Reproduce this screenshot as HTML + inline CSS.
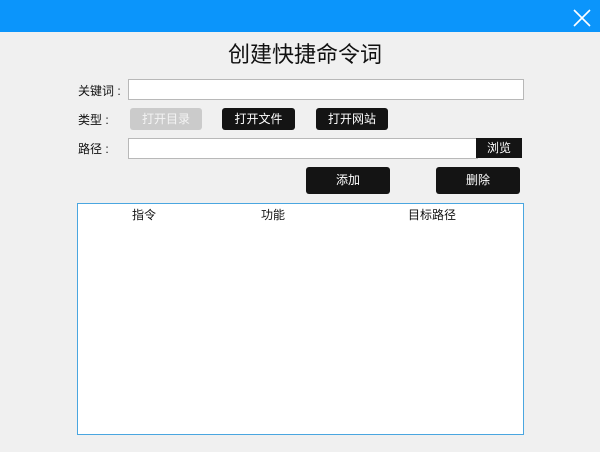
<!DOCTYPE html>
<html><head><meta charset="utf-8"><style>
*{margin:0;padding:0;box-sizing:border-box}
body{width:600px;height:452px;background:#f0f0f0;position:relative;overflow:hidden;font-family:"Liberation Sans","Noto Sans CJK SC",sans-serif;font-size:12px;color:#111}
.bar{position:absolute;left:0;top:0;width:600px;height:32px;background:#0b95fb}
.a{position:absolute}
.btn{position:absolute;background:#141414;color:#fff;border-radius:3px;text-align:center;font-size:12px}
.in{position:absolute;background:#fff;border:1px solid #b8b8b8}
</style></head><body>
<div class="bar"></div>
<svg class="a" style="left:573px;top:9px" width="18" height="18"><path d="M1 1L17 17M17 1L1 17" stroke="#fff" stroke-width="1.6"/></svg>
<div class="a" style="left:0;width:610px;top:40px;text-align:center;font-size:22px;line-height:30px">创建快捷命令词</div>
<div class="a" style="left:78px;top:82px">关键词 :</div>
<div class="in" style="left:128px;top:79px;width:396px;height:21px"></div>
<div class="a" style="left:78px;top:111px">类型 :</div>
<div class="btn" style="left:130px;top:108px;width:72px;height:22px;line-height:22px;background:#cbcbcb;color:#f4f4f4">打开目录</div>
<div class="btn" style="left:222px;top:108px;width:73px;height:22px;line-height:22px">打开文件</div>
<div class="btn" style="left:316px;top:108px;width:72px;height:22px;line-height:22px">打开网站</div>
<div class="a" style="left:78px;top:140px">路径 :</div>
<div class="in" style="left:128px;top:138px;width:350px;height:21px"></div>
<div class="btn" style="left:476px;top:138px;width:46px;height:20px;line-height:20px;border-radius:0">浏览</div>
<div class="btn" style="left:306px;top:167px;width:84px;height:27px;line-height:27px">添加</div>
<div class="btn" style="left:436px;top:167px;width:84px;height:27px;line-height:27px">删除</div>
<div class="a" style="left:77px;top:203px;width:447px;height:232px;background:#fff;border:1px solid #4aa6e0"></div>
<div class="a" style="left:132px;top:206px">指令</div>
<div class="a" style="left:261px;top:206px">功能</div>
<div class="a" style="left:408px;top:206px">目标路径</div>
</body></html>
